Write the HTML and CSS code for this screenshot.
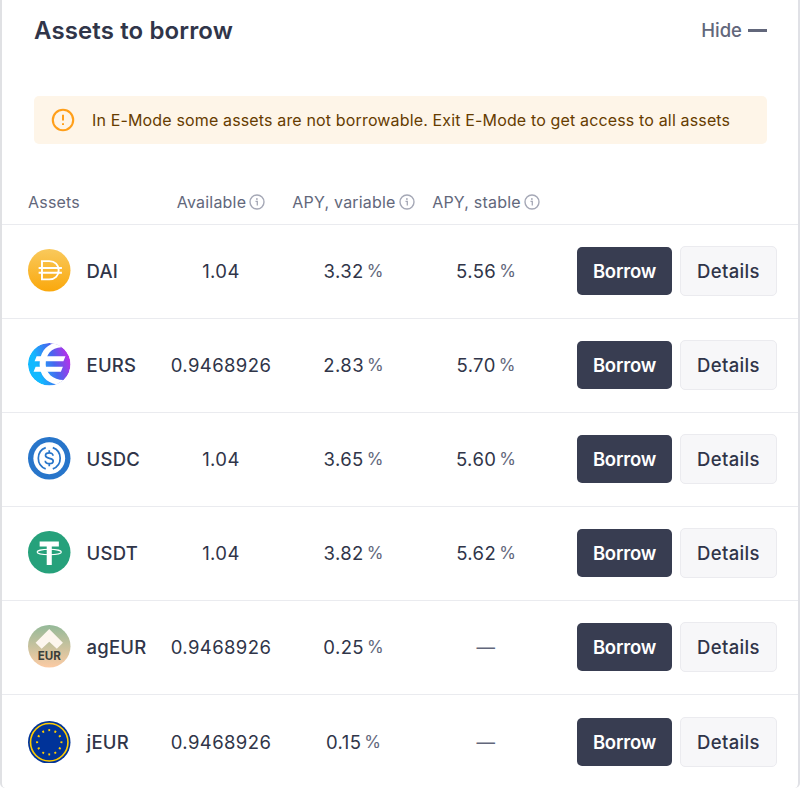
FILE: index.html
```html
<!DOCTYPE html>
<html lang="en">
<head>
  <meta charset="UTF-8" />
  <meta name="viewport" content="width=device-width, initial-scale=1.0"/>
  <title>Assets to borrow</title>
  <link rel="stylesheet" href="styles.css">
</head>
<body>
  <svg class="defs" width="0" height="0">
    <defs>
      <symbol id="info" viewBox="0 0 16 16">
        <circle cx="8" cy="8" r="7" fill="none" stroke="currentColor" stroke-width="1.4"/>
        <circle cx="7.9" cy="5" r="0.9" fill="currentColor"/>
        <path d="M6.5 7.4h1.8v4" fill="none" stroke="currentColor" stroke-width="1.3"/>
      </symbol>
      <linearGradient id="daiFill" x1="0" y1="0" x2="0" y2="1">
        <stop offset="0" stop-color="#f9c95c"/>
        <stop offset="1" stop-color="#faa80c"/>
      </linearGradient>
      <linearGradient id="eursFill" x1="0" y1="0.6" x2="1" y2="0.3">
        <stop offset="0.2" stop-color="#13b9ff"/>
        <stop offset="0.6" stop-color="#4766ee"/>
        <stop offset="1" stop-color="#c42ae8"/>
      </linearGradient>
      <linearGradient id="ageurFill" x1="0" y1="0" x2="0" y2="1">
        <stop offset="0" stop-color="#94b998"/>
        <stop offset="1" stop-color="#fccba4"/>
      </linearGradient>
      <clipPath id="coin"><circle cx="21" cy="21" r="21"/></clipPath>
    </defs>
  </svg>

  <main class="card">
    <header class="card-header">
      <h1>Assets to borrow</h1>
      <button type="button" class="hide-btn">Hide <span class="dash"></span></button>
    </header>

    <div class="warning">
      <svg class="warning-icon" viewBox="0 0 24 24">
        <circle cx="12" cy="12" r="10.2" fill="none" stroke="currentColor" stroke-width="2.1"/>
        <path d="M12 6.8v5.6M12 15.2v1.9" stroke="currentColor" stroke-width="2"/>
      </svg>
      <p>In E-Mode some assets are not borrowable. Exit E-Mode to get access to all assets</p>
    </div>

    <div class="table">
      <div class="table-head">
        <div>Assets</div>
        <div class="cell">Available <svg class="info"><use href="#info"/></svg></div>
        <div class="cell">APY, variable <svg class="info"><use href="#info"/></svg></div>
        <div class="cell">APY, stable <svg class="info"><use href="#info"/></svg></div>
      </div>

      <div class="row">
        <div class="asset">
          <svg class="coin" viewBox="0 0 42 42">
            <circle cx="21" cy="21" r="21" fill="url(#daiFill)"/>
            <path d="M13.8 12h7.200c5.600 0 9.300 3.700 9.300 9s-3.700 9-9.300 9h-7.200zM10.500 18.700h23M10.500 23.500h23" fill="none" stroke="#fff" stroke-width="1.900"/>
          </svg>
          <span>DAI</span>
        </div>
        <div class="cell">1.04</div>
        <div class="cell">3.32<span class="pct">%</span></div>
        <div class="cell">5.56<span class="pct">%</span></div>
        <div class="actions"><button class="borrow">Borrow</button><button class="details">Details</button></div>
      </div>

      <div class="row">
        <div class="asset">
          <svg class="coin" viewBox="0 0 42 42">
            <g clip-path="url(#coin)">
              <circle cx="21" cy="21" r="21" fill="url(#eursFill)"/>
              <path d="M26 0C17 3 11.500 10 11.500 21S18 39 28.500 41l8-4.500C25 37 17.500 30 17.500 21S23 4.500 33 4.300l5-1z" fill="#fff"/>
              <path d="M8.500 13h28.500l-2 5H6.500zM7.500 23.500H34.500l-2 4.800H5.500z" fill="#fff"/>
            </g>
          </svg>
          <span>EURS</span>
        </div>
        <div class="cell">0.9468926</div>
        <div class="cell">2.83<span class="pct">%</span></div>
        <div class="cell">5.70<span class="pct">%</span></div>
        <div class="actions"><button class="borrow">Borrow</button><button class="details">Details</button></div>
      </div>

      <div class="row">
        <div class="asset">
          <svg class="coin" viewBox="0 0 42 42">
            <circle cx="21" cy="21" r="21" fill="#2775ca"/>
            <circle cx="21" cy="21" r="15.700" fill="#fff"/>
            <path d="M17.500 10.500a11.200 11.200 0 0 0 0 21M24.500 10.500a11.200 11.200 0 0 1 0 21M21 13.200v2.500M21 26.300v2.500M24.700 18.500c0-1.900-1.500-2.800-3.700-2.800s-3.700 1-3.700 2.600c0 3.700 7.600 1.800 7.600 5.300 0 1.700-1.600 2.700-3.900 2.700s-3.900-1-3.900-2.900" fill="none" stroke="#2775ca" stroke-width="1.700"/>
          </svg>
          <span>USDC</span>
        </div>
        <div class="cell">1.04</div>
        <div class="cell">3.65<span class="pct">%</span></div>
        <div class="cell">5.60<span class="pct">%</span></div>
        <div class="actions"><button class="borrow">Borrow</button><button class="details">Details</button></div>
      </div>

      <div class="row">
        <div class="asset">
          <svg class="coin" viewBox="0 0 42 42">
            <circle cx="21" cy="21" r="21" fill="#26a17b"/>
            <path d="M11.500 10.300h19v5h-7V33.500h-5V15.300h-7z" fill="#fff"/>
            <ellipse cx="21" cy="20.800" rx="12" ry="2.700" fill="none" stroke="#fff" stroke-width="1.100"/>
          </svg>
          <span>USDT</span>
        </div>
        <div class="cell">1.04</div>
        <div class="cell">3.82<span class="pct">%</span></div>
        <div class="cell">5.62<span class="pct">%</span></div>
        <div class="actions"><button class="borrow">Borrow</button><button class="details">Details</button></div>
      </div>

      <div class="row">
        <div class="asset">
          <svg class="coin" viewBox="0 0 42 42">
            <circle cx="21" cy="21" r="21" fill="url(#ageurFill)"/>
            <path d="M21 4L34.500 17.500l-6 6L21 16.500l-7.500 7-6-6z" fill="#fdf6ee"/>
            <text class="coin-text" x="21" y="35" text-anchor="middle">EUR</text>
          </svg>
          <span>agEUR</span>
        </div>
        <div class="cell">0.9468926</div>
        <div class="cell">0.25<span class="pct">%</span></div>
        <div class="cell none">—</div>
        <div class="actions"><button class="borrow">Borrow</button><button class="details">Details</button></div>
      </div>

      <div class="row">
        <div class="asset">
          <svg class="coin" viewBox="0 0 42 42">
            <circle cx="21" cy="21" r="21" fill="#039"/>
            <circle cx="21" cy="21" r="18.500" fill="none" stroke="#fc0" stroke-width="1.600"/>
            <circle cx="21" cy="21" r="12" fill="none" stroke="#fc0" stroke-width="2" pathLength="120" stroke-dasharray="3 7" stroke-dashoffset="1.500"/>
          </svg>
          <span>jEUR</span>
        </div>
        <div class="cell">0.9468926</div>
        <div class="cell">0.15<span class="pct">%</span></div>
        <div class="cell none">—</div>
        <div class="actions"><button class="borrow">Borrow</button><button class="details">Details</button></div>
      </div>
    </div>
  </main>
</body>
</html>
```
FILE: styles.css
```css
* {
  box-sizing: border-box;
}

body {
  margin: 0;
  background: #fff;
  color: #303549;
  font-family: Inter, sans-serif;
}

.defs {
  display: block;
}

.card {
  height: 788px;
  border-left: 2px solid #e0e1e4;
  border-right: 2px solid #e0e1e6;
  border-radius: 0 0 5px 5px;
  overflow: hidden;
}

.card-header {
  display: flex;
  justify-content: space-between;
  align-items: center;
  height: 60px;
  padding: 0 31px 0 32px;
}

h1 {
  margin: 0;
  font-size: 24px;
  font-weight: 600;
  letter-spacing: 0.12px;
}

button {
  font-family: inherit;
  cursor: pointer;
}

.hide-btn {
  display: flex;
  align-items: center;
  gap: 6px;
  padding: 0;
  border: none;
  background: none;
  color: #62677b;
  font-size: 18.5px;
  font-weight: 450;
  letter-spacing: 0;
}

.dash {
  width: 19px;
  height: 3px;
  background: #62677b;
}

.warning {
  display: flex;
  align-items: center;
  gap: 17px;
  height: 48px;
  margin: 36px 31px 0 32px;
  padding-left: 17px;
  border-radius: 5px;
  background: #fef5e8;
  color: #663c00;
}

.warning-icon {
  width: 24px;
  height: 24px;
  color: #ff9f1a;
}

.warning p {
  margin: 0;
  font-size: 16px;
  letter-spacing: 0.15px;
  white-space: nowrap;
}

.table-head,
.row {
  display: grid;
  grid-template-columns: 127px 132px 133px 132px 1fr;
  align-items: center;
  padding: 0 21px 0 26px;
  border-bottom: 1px solid #eaebef;
}

.table-head {
  height: 81px;
  padding-top: 35px;
  color: #62677b;
  font-size: 16px;
  letter-spacing: 0.2px;
}

.row {
  height: 94px;
  padding-bottom: 2px;
  font-size: 18.5px;
  letter-spacing: 0.4px;
}

.row:last-child {
  padding-bottom: 0;
  border-bottom: none;
}

.cell {
  display: flex;
  justify-content: center;
  align-items: center;
  gap: 3px;
  white-space: nowrap;
}

.info {
  width: 16px;
  height: 16px;
  color: #a5a8b6;
}

.asset {
  display: flex;
  align-items: center;
  gap: 16px;
  font-weight: 550;
  letter-spacing: 0.25px;
}

.coin {
  flex: none;
  width: 42.5px;
  height: 42.5px;
}

.coin-text {
  font-size: 11.5px;
  font-weight: 700;
  letter-spacing: 0;
  fill: #3b3f3b;
}

.pct {
  font-size: 17px;
  letter-spacing: 0;
}

.pct,
.none {
  color: #62677b;
}

.actions {
  display: flex;
  justify-content: flex-end;
  align-items: center;
  gap: 8px;
}

.actions button {
  border-radius: 5px;
  font-size: 18.5px;
  letter-spacing: 0.35px;
}

.actions .borrow {
  width: 95px;
  height: 48px;
  padding: 0;
  border: none;
  background: #383d51;
  color: #fff;
  font-weight: 600;
  letter-spacing: -0.2px;
}

.details {
  width: 97px;
  height: 50px;
  padding: 0;
  border: 1px solid #ebebef;
  background: #f7f7f9;
  color: #303549;
  font-weight: 450;
}
```
